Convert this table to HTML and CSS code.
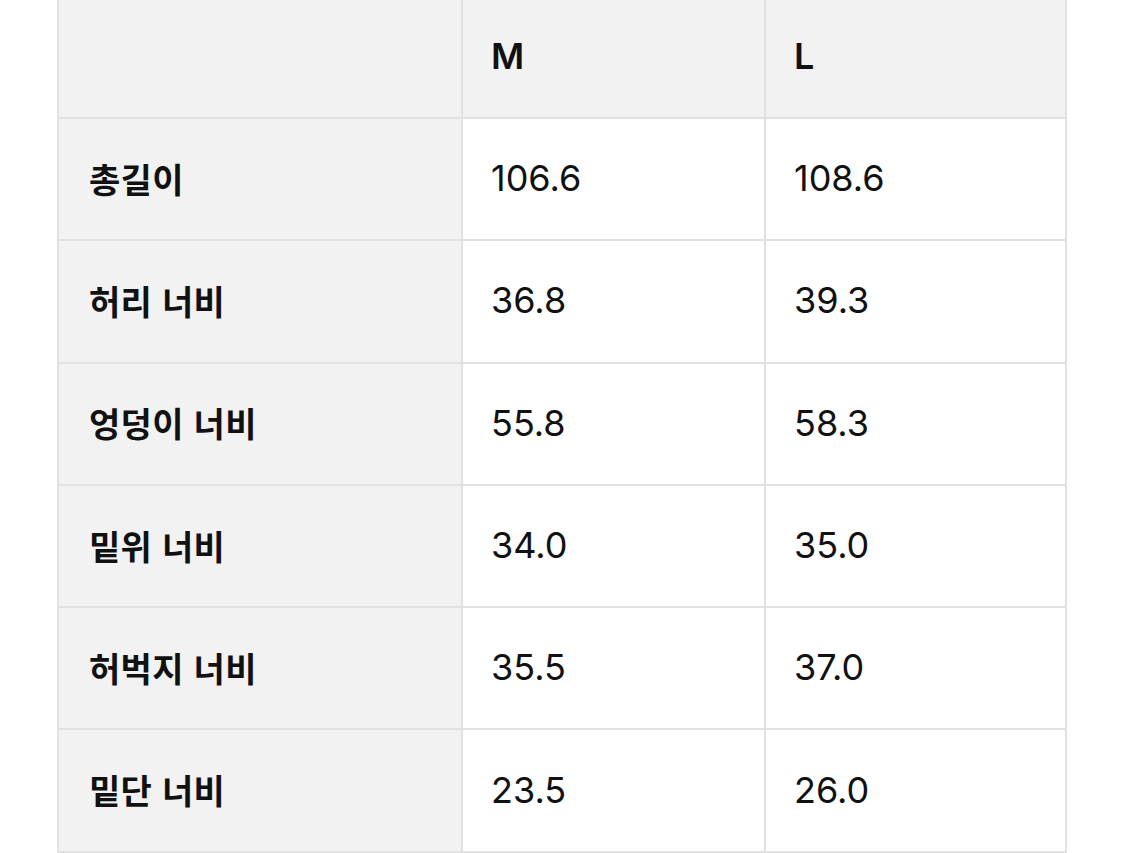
FILE: index.html
```html
<!DOCTYPE html>
<html lang="ko">
<head>
<meta charset="utf-8">
<link rel="stylesheet" href="styles.css">
</head>
<body>
<div class="size-table">
  <div class="cell head label"></div>
  <div class="cell head">M</div>
  <div class="cell head">L</div>

  <div class="cell label">총길이</div>
  <div class="cell">106.6</div>
  <div class="cell">108.6</div>

  <div class="cell label">허리 너비</div>
  <div class="cell">36.8</div>
  <div class="cell">39.3</div>

  <div class="cell label">엉덩이 너비</div>
  <div class="cell">55.8</div>
  <div class="cell">58.3</div>

  <div class="cell label">밑위 너비</div>
  <div class="cell">34.0</div>
  <div class="cell">35.0</div>

  <div class="cell label">허벅지 너비</div>
  <div class="cell">35.5</div>
  <div class="cell">37.0</div>

  <div class="cell label">밑단 너비</div>
  <div class="cell">23.5</div>
  <div class="cell">26.0</div>
</div>
</body>
</html>
```
FILE: styles.css
```css
html, body {
  margin: 0;
  padding: 0;
  background: #ffffff;
}
body {
  padding-left: 57px;
  font-family: Inter, "Noto Sans CJK KR", sans-serif;
  color: #111111;
}
.size-table {
  display: grid;
  width: 1006px;
  grid-template-columns: 402px 301px 299px;
  grid-template-rows: 117px repeat(6, 120.3px);
  gap: 2px;
  padding: 0 2px 2px 2px;
  background: #e1e1e1;
}
.cell {
  background: #ffffff;
  display: flex;
  align-items: center;
  padding-left: 28px;
  font-size: 36px;
  letter-spacing: 0;
  padding-bottom: 2px;
}
.head {
  background: #f2f2f2;
  font-weight: 600;
  padding-bottom: 6px;
}
.label {
  background: #f2f2f2;
  font-family: "Noto Sans CJK KR", sans-serif;
  font-weight: 700;
  font-size: 34px;
  letter-spacing: 0.3px;
  padding-left: 30px;
}
```
